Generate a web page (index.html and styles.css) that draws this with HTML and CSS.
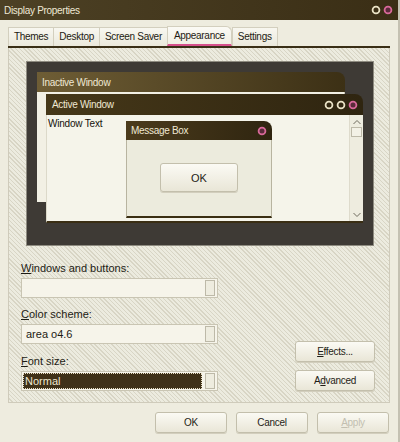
FILE: index.html
```html
<!DOCTYPE html>
<html lang="en">
<head>
    <meta charset="UTF-8">
    <title>Display Properties</title>
    <link rel="stylesheet" href="styles.css">
</head>
<body>
    <div class="window">
        <div class="titlebar">
            <span class="title">Display Properties</span>
            <span class="title-btns">
                <svg class="ring" width="10" height="10"><circle cx="5" cy="5" r="3.4" fill="none" stroke="#ebe3c6" stroke-width="1.8"/></svg>
                <svg class="ring" width="10" height="10"><circle cx="5" cy="5" r="3.4" fill="#5a2a3a" stroke="#d9699a" stroke-width="1.8"/></svg>
            </span>
        </div>

        <div class="content">
            <div class="tabs">
                <div class="tab">Themes</div>
                <div class="tab">Desktop</div>
                <div class="tab">Screen Saver</div>
                <div class="tab current">Appearance</div>
                <div class="tab">Settings</div>
            </div>

            <div class="panel">
                <div class="preview">
                    <div class="win win-inactive">
                        <div class="win-title">Inactive Window</div>
                        <div class="win-body"></div>
                    </div>

                    <div class="win win-active">
                        <div class="win-title">
                            <span>Active Window</span>
                            <span class="title-btns">
                                <svg width="12" height="10"><circle cx="6" cy="5" r="3.4" fill="none" stroke="#ebe3c6" stroke-width="1.8"/></svg>
                                <svg width="12" height="10"><circle cx="6" cy="5" r="3.4" fill="none" stroke="#ebe3c6" stroke-width="1.8"/></svg>
                                <svg width="12" height="10"><circle cx="6" cy="5" r="3.4" fill="#5a2a3a" stroke="#d9699a" stroke-width="1.8"/></svg>
                            </span>
                        </div>
                        <div class="win-body">
                            <div class="win-text">Window Text</div>
                            <div class="scrollbar">
                                <svg width="12" height="8"><polyline points="2.5,6 6,2.5 9.5,6" fill="none" stroke="#6f6b5e" stroke-width="1"/></svg>
                                <div class="thumb"></div>
                                <div class="track"></div>
                                <svg width="12" height="8"><polyline points="2.5,2 6,5.5 9.5,2" fill="none" stroke="#6f6b5e" stroke-width="1"/></svg>
                            </div>
                        </div>
                    </div>

                    <div class="msgbox">
                        <div class="win-title">
                            <span>Message Box</span>
                            <svg width="10" height="10"><circle cx="5" cy="5" r="3.4" fill="#5a2a3a" stroke="#d9699a" stroke-width="1.8"/></svg>
                        </div>
                        <div class="msg-body">
                            <button class="btn msg-ok">OK</button>
                        </div>
                    </div>
                </div>

                <div class="options">
                    <div class="fields">
                        <div class="field">
                            <div class="label"><u>W</u>indows and buttons:</div>
                            <div class="combo">
                                <span class="combo-text"></span>
                                <span class="combo-btn"></span>
                            </div>
                        </div>
                        <div class="field">
                            <div class="label"><u>C</u>olor scheme:</div>
                            <div class="combo">
                                <span class="combo-text">area o4.6</span>
                                <span class="combo-btn"></span>
                            </div>
                        </div>
                        <div class="field">
                            <div class="label"><u>F</u>ont size:</div>
                            <div class="combo">
                                <span class="combo-text selected">Normal</span>
                                <span class="combo-btn"></span>
                            </div>
                        </div>
                    </div>
                    <div class="side-buttons">
                        <button class="btn"><u>E</u>ffects...</button>
                        <button class="btn">A<u>d</u>vanced</button>
                    </div>
                </div>
            </div>

            <div class="footer">
                <button class="btn">OK</button>
                <button class="btn">Cancel</button>
                <button class="btn disabled"><u>A</u>pply</button>
            </div>
        </div>
    </div>
</body>
</html>
```

FILE: styles.css
```css
* {
    box-sizing: border-box;
    margin: 0;
    padding: 0;
}

body {
    font-family: "Liberation Sans", Arial, sans-serif;
    background-color: #eeecdf;
    width: 400px;
    height: 442px;
    overflow: hidden;
}

.window {
    height: 442px;
    border-right: 2px solid #c4c1b2;
}

.titlebar {
    height: 20px;
    display: flex;
    align-items: center;
    justify-content: space-between;
    padding: 0 5px 0 4px;
    background: linear-gradient(to right, #4d4125, #3a2e15);
}

.title {
    color: #efe9d6;
    font-size: 10px;
    letter-spacing: -0.3px;
}

.title-btns {
    display: flex;
    gap: 2px;
    align-items: center;
}

.ring {
    display: block;
}

.content {
    padding-top: 7px;
}

/* tabs */
.tabs {
    display: flex;
    align-items: flex-end;
    height: 21px;
    margin: 0 8px;
    border-bottom: 2px solid #3a2f16;
}

.tab {
    flex: none;
    white-space: nowrap;
    height: 19px;
    padding: 0 5px;
    line-height: 18px;
    font-size: 10px;
    letter-spacing: -0.3px;
    color: #1d1a12;
    background: linear-gradient(#f8f7f0, #ebe9dc);
    border: 1px solid #d3cfbe;
    border-bottom: none;
    border-right: none;
}

.tab:last-child {
    border-right: 1px solid #d3cfbe;
}

.tab.current {
    height: 20px;
    padding: 0 6px;
    background: linear-gradient(#fbfaf5, #f1efe4);
    border-top-right-radius: 6px;
    border-right: 1px solid #d3cfbe;
    border-bottom: 2px solid #d6508c;
    line-height: 17px;
}

/* main panel */
.panel {
    margin: 0 8px;
    padding: 13px 14px 11px 12px;
    border: 1px solid #cfcbbb;
    border-top: none;
    background: repeating-linear-gradient(45deg, #ecebdf 0px, #ecebdf 2px, #d8d5c5 2px, #d8d5c5 3px);
}

.preview {
    position: relative;
    width: 348px;
    height: 185px;
    margin-left: 5px;
    background-color: #3e3a35;
    border: 1px solid #8e8b80;
}

.win, .msgbox {
    position: absolute;
}

.win-title {
    height: 20px;
    display: flex;
    align-items: center;
    justify-content: space-between;
    padding: 0 6px 0 5px;
    color: #efe8d3;
    font-size: 10px;
    letter-spacing: -0.3px;
    border-top-right-radius: 8px;
}

.win-inactive {
    left: 10px;
    top: 10px;
    width: 308px;
    height: 130px;
}

.win-inactive .win-title {
    background: linear-gradient(to right, #6e5d35, #3c3015);
}

.win-inactive .win-body {
    height: 110px;
    background-color: #f2f0e4;
    border-right: 1px solid #c9c5b2;
}

.win-active {
    left: 19px;
    top: 32px;
    width: 317px;
    height: 129px;
}

.win-active .win-title {
    height: 21px;
    padding-left: 6px;
    padding-right: 4px;
    background: linear-gradient(to right, #463819, #2f2510);
}

.win-active .title-btns {
    gap: 0;
}

.win-active .win-body {
    height: 108px;
    display: flex;
    justify-content: space-between;
    background-color: #f5f4ea;
    border-left: 1px solid #dcd9c9;
    border-bottom: 2px solid #3a2e14;
}

.win-text {
    padding: 3px 0 0 1px;
    font-size: 10px;
    letter-spacing: -0.2px;
    color: #14110a;
}

.scrollbar {
    width: 14px;
    display: flex;
    flex-direction: column;
    align-items: center;
    padding: 3px 1px 2px;
    background-color: #eeecdf;
    border-left: 1px solid #dedbcc;
}

.thumb {
    width: 11px;
    height: 10px;
    margin-top: 1px;
    border: 1px solid #bdb9a8;
    background-color: #f3f1e6;
}

.track {
    flex: 1;
}

.msgbox {
    left: 99px;
    top: 59px;
    width: 146px;
    height: 97px;
}

.msgbox .win-title {
    height: 19px;
    padding-right: 5px;
    background: linear-gradient(to right, #4b3b1c, #2f2510);
}

.msg-body {
    height: 78px;
    display: flex;
    justify-content: center;
    padding-top: 23px;
    background-color: #ecebdd;
    border-left: 1px solid #b8b4a0;
    border-right: 1px solid #b8b4a0;
    border-bottom: 2px solid #3a2e12;
}

.btn {
    width: 80px;
    height: 21px;
    font-family: "Liberation Sans", Arial, sans-serif;
    font-size: 10px;
    letter-spacing: -0.3px;
    color: #1f1d16;
    background: linear-gradient(#fbfaf4, #e9e6d7);
    border: 1px solid #c3bfac;
    border-radius: 3px;
    box-shadow: 0 1px 0 #d2cebd;
}

.msg-ok {
    width: 78px;
    height: 29px;
    font-size: 11px;
    letter-spacing: 0;
}

/* options below the preview */
.options {
    display: flex;
    justify-content: space-between;
    align-items: flex-end;
    margin-top: 16px;
}

.fields {
    width: 197px;
}

.field + .field {
    margin-top: 10px;
}

.field:last-child {
    margin-top: 11px;
}

.label {
    font-size: 11px;
    line-height: 13px;
    margin-bottom: 3px;
    color: #1d1b14;
}

.combo {
    height: 20px;
    display: flex;
    align-items: center;
    padding: 1px 2px 1px 1px;
    background-color: #f6f4ea;
    border: 1px solid #c9c5b3;
}

.combo-text {
    flex: 1;
    height: 16px;
    padding-left: 3px;
    font-size: 11px;
    line-height: 16px;
    color: #1d1b14;
}

.combo-text.selected {
    background-color: #3f3118;
    color: #efe8d0;
    outline: 1px dotted #e8e0c6;
    outline-offset: -1px;
    padding-left: 2px;
    margin-right: 2px;
}

.combo-btn {
    width: 10px;
    height: 16px;
    margin-left: 1px;
    border: 1px solid #bdb9a8;
    background-color: #eeecdf;
}

.side-buttons {
    display: flex;
    flex-direction: column;
    gap: 8px;
}

.footer {
    display: flex;
    justify-content: flex-end;
    gap: 9px;
    padding: 9px 9px 0 0;
}

.footer .btn {
    width: 72px;
}

.btn.disabled {
    color: #c2bfb0;
}
```
